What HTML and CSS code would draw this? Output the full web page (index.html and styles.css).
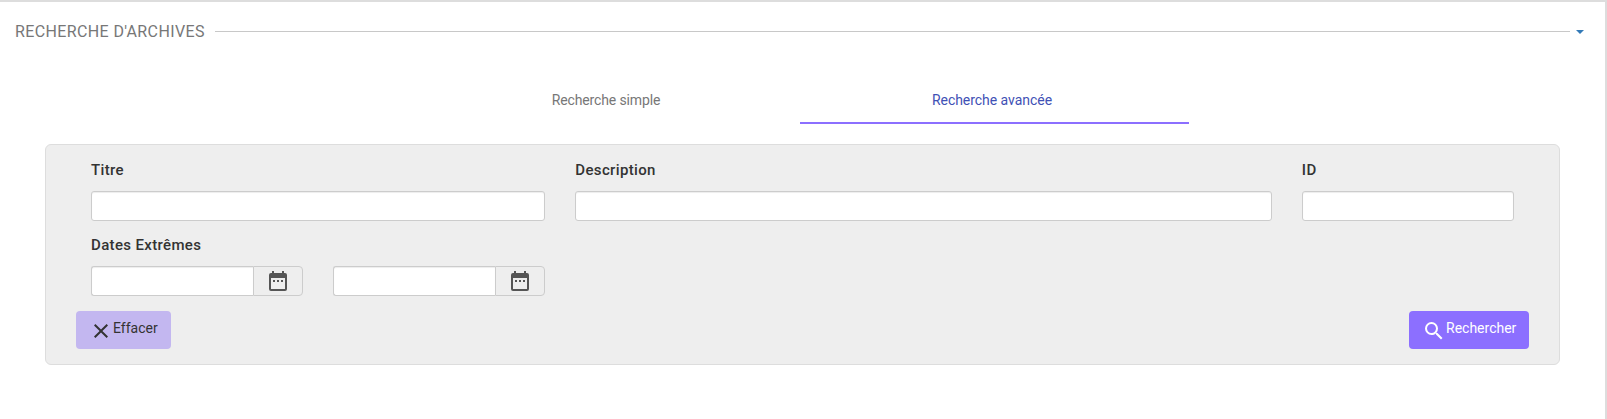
FILE: index.html
```html
<!DOCTYPE html>
<html lang="fr">
<head>
<meta charset="utf-8">
<title>Recherche d'archives</title>
<link rel="stylesheet" href="styles.css">
</head>
<body>
<main class="page">
  <header class="heading">
    <h1 class="heading-title">RECHERCHE D'ARCHIVES</h1>
    <span class="heading-line"></span>
    <svg class="caret" viewBox="0 0 8 4"><path d="M0 0h8L4 4z"/></svg>
  </header>
  <nav class="tabs">
    <a class="tab">Recherche simple</a>
    <a class="tab tab-active">Recherche avancée</a>
  </nav>
  <form class="panel">
    <div class="row">
      <div class="field span-4"><label class="label" for="titre">Titre</label><input class="input" id="titre"></div>
      <div class="field span-6"><label class="label" for="desc">Description</label><input class="input" id="desc"></div>
      <div class="field span-2"><label class="label" for="ident">ID</label><input class="input" id="ident"></div>
    </div>
    <div class="row">
      <div class="field span-2">
        <label class="label" for="debut">Dates Extrêmes</label>
        <div class="group"><input class="input" id="debut"><span class="addon"><svg class="calendar" viewBox="0 0 18 20"><path fill-rule="evenodd" d="M3 0h2v2h8V0h2v2h1a2 2 0 0 1 2 2v14a2 2 0 0 1-2 2H2a2 2 0 0 1-2-2V4a2 2 0 0 1 2-2h1zM2 7v11h14V7zM4 9h2v2H4zM8 9h2v2H8zM12 9h2v2h-2z"/></svg></span></div>
      </div>
      <div class="field span-2 field-end">
        <div class="group"><input class="input"><span class="addon"><svg class="calendar" viewBox="0 0 18 20"><path fill-rule="evenodd" d="M3 0h2v2h8V0h2v2h1a2 2 0 0 1 2 2v14a2 2 0 0 1-2 2H2a2 2 0 0 1-2-2V4a2 2 0 0 1 2-2h1zM2 7v11h14V7zM4 9h2v2H4zM8 9h2v2H8zM12 9h2v2h-2z"/></svg></span></div>
      </div>
    </div>
    <div class="actions">
      <button type="button" class="button button-clear"><svg class="icon" viewBox="0 0 24 24"><path d="M19 6.41 17.59 5 12 10.59 6.41 5 5 6.41 10.59 12 5 17.59 6.41 19 12 13.41 17.59 19 19 17.59 13.41 12z"/></svg><span>Effacer</span></button>
      <button type="button" class="button button-search"><svg class="icon" viewBox="0 0 24 24"><path d="M15.5 14h-.79l-.28-.27A6.47 6.47 0 0 0 16 9.5 6.5 6.5 0 1 0 9.5 16c1.61 0 3.09-.59 4.23-1.57l.27.28v.79l5 4.99L20.49 19zm-6 0C7.01 14 5 11.99 5 9.5S7.01 5 9.5 5 14 7.01 14 9.5 11.99 14 9.5 14z"/></svg><span>Rechercher</span></button>
    </div>
  </form>
</main>
</body>
</html>
```

FILE: styles.css
```css
* { box-sizing: border-box; }
body {
  margin: 0;
  background: #fff;
  color: #333;
  font: 14px/20px Roboto, sans-serif;
}
.page {
  height: 419px;
  border-top: 2px solid #ddd;
  border-right: 2px solid #ddd;
  overflow: hidden;
}
.heading {
  display: flex;
  align-items: center;
  height: 59px;
  padding: 0 21px 0 15px;
}
.heading-title {
  margin: 0 10px 0 0;
  width: 190px;
  color: #777;
  font-size: 16px;
  font-weight: 400;
  letter-spacing: .38px;
  white-space: nowrap;
}
.heading-line { flex: 1; height: 1px; background: #c8c8c8; }
.caret { width: 8px; height: 4px; margin: 1px 0 0 6px; fill: #337ab7; }
.tabs {
  display: flex;
  width: 778px;
  margin: 16px 0 20px 411px;
}
.tab {
  flex: none;
  width: 389px;
  height: 47px;
  padding: 13px 0 0 1px;
  color: #777;
  letter-spacing: -.14px;
  text-align: center;
}
.tab-active {
  padding: 13px 5px 0 0;
  border-bottom: 2px solid #8c6fff;
  color: #3f51b5;
  letter-spacing: -.04px;
}
.panel {
  width: 1515px;
  height: 221px;
  margin-left: 45px;
  padding: 14px 30px;
  border: 1px solid #ddd;
  border-radius: 6px;
  background: #eee;
}
.row { display: grid; grid-template-columns: repeat(12, 1fr); height: 75px; }
.field { display: flex; flex-direction: column; min-width: 0; padding: 0 15px; }
.field-end { padding-top: 32px; }
.span-2 { grid-column: span 2; }
.span-4 { grid-column: span 4; }
.span-6 { grid-column: span 6; }
.label { height: 32px; padding-top: 1px; font-size: 15px; font-weight: 500; letter-spacing: .35px; }
.input {
  width: 100%;
  min-width: 0;
  height: 30px;
  padding: 5px 10px;
  border: 1px solid #ccc;
  border-radius: 3px;
  background: #fff;
  box-shadow: inset 0 1px 1px rgba(0, 0, 0, .075);
}
.group { display: flex; }
.group .input { flex: 1; border-right: 0; border-radius: 3px 0 0 3px; }
.addon {
  display: flex;
  flex: none;
  align-items: center;
  justify-content: center;
  width: 50px;
  height: 30px;
  border: 1px solid #ccc;
  border-radius: 0 4px 4px 0;
}
.calendar { width: 18px; height: 20px; fill: #555; }
.actions { display: flex; justify-content: space-between; margin-top: 2px; }
.button {
  display: flex;
  height: 38px;
  padding: 7px 12px 0 13px;
  border: 0;
  border-radius: 4px;
  font: 14px/20px Roboto, sans-serif;
}
.button-clear { width: 95px; background: #c3b7f0; color: #333; }
.button-search { width: 120px; background: #8c6fff; color: #fff; }
.icon { flex: none; width: 24px; height: 24px; margin-top: 1px; fill: currentColor; }
```
